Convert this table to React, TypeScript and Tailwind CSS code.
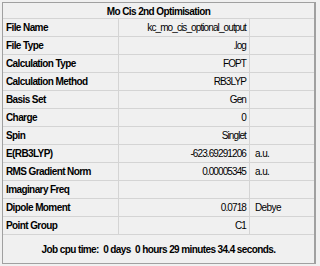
const rows: [string, string, string][] = [
  ["File Name", "kc_mo_cis_optional_output", ""],
  ["File Type", ".log", ""],
  ["Calculation Type", "FOPT", ""],
  ["Calculation Method", "RB3LYP", ""],
  ["Basis Set", "Gen", ""],
  ["Charge", "0", ""],
  ["Spin", "Singlet", ""],
  ["E(RB3LYP)", "-623.69291206", "a.u."],
  ["RMS Gradient Norm", "0.00005345", "a.u."],
  ["Imaginary Freq", "", ""],
  ["Dipole Moment", "0.0718", "Debye"],
  ["Point Group", "C1", ""],
];

export default function App() {
  return (
    <div className="w-[320px] h-[266px] bg-[#f0f0f0] p-[2px] font-['Liberation_Sans',Arial,sans-serif] text-[10px] tracking-[-0.6px] text-black">
      <div className="flex flex-col h-[262px] w-[314px] border border-[#a0a0a0] border-r-2 bg-[#f0f0f0]">
        <div className="h-[16px] pt-[1px] flex items-center justify-center font-bold border-b border-[#d4d4d4]">
          Mo Cis 2nd Optimisation
        </div>
        <div className="grid grid-cols-[116px_131px_1fr]">
          {rows.map(([label, value, unit]) => (
            <div key={label} className="contents">
              <div className="h-[18px] flex items-center pl-[3px] font-bold border-b border-r border-[#d4d4d4]">
                {label}
              </div>
              <div className="h-[18px] flex items-center justify-end pr-[3px] tracking-[-0.9px] border-b border-r border-[#d4d4d4]">
                {value}
              </div>
              <div className="h-[18px] flex items-center pl-[5px] border-b border-[#d4d4d4]">
                {unit}
              </div>
            </div>
          ))}
        </div>
        <div className="flex-1 flex items-center justify-center font-bold pt-[1px]">
          Job cpu time:&nbsp; 0 days&nbsp; 0 hours 29 minutes 34.4 seconds.
        </div>
      </div>
    </div>
  );
}
